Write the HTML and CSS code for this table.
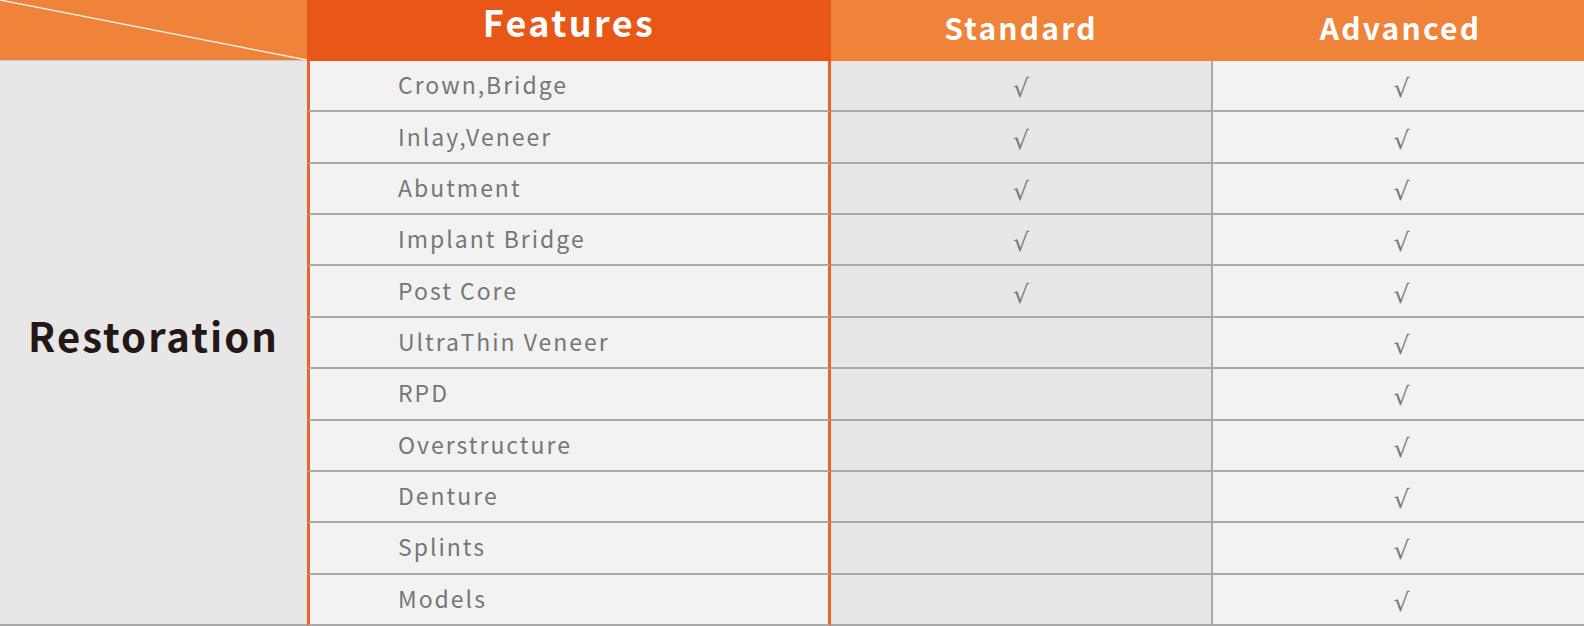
FILE: index.html
```html
<!DOCTYPE html>
<html lang="en">
<head>
<meta charset="utf-8">
<title>Features comparison</title>
<link rel="stylesheet" href="styles.css">
</head>
<body>
<div class="table">
  <div class="hd hd-corner"></div>
  <div class="hd hd-features">Features</div>
  <div class="hd hd-plan">Standard</div>
  <div class="hd hd-plan">Advanced</div>

  <div class="cat">Restoration</div>

  <div class="feat">Crown,Bridge</div><div class="std">√</div><div class="adv">√</div>
  <div class="feat">Inlay,Veneer</div><div class="std">√</div><div class="adv">√</div>
  <div class="feat">Abutment</div><div class="std">√</div><div class="adv">√</div>
  <div class="feat">Implant Bridge</div><div class="std">√</div><div class="adv">√</div>
  <div class="feat">Post Core</div><div class="std">√</div><div class="adv">√</div>
  <div class="feat">UltraThin Veneer</div><div class="std"></div><div class="adv">√</div>
  <div class="feat">RPD</div><div class="std"></div><div class="adv">√</div>
  <div class="feat">Overstructure</div><div class="std"></div><div class="adv">√</div>
  <div class="feat">Denture</div><div class="std"></div><div class="adv">√</div>
  <div class="feat">Splints</div><div class="std"></div><div class="adv">√</div>
  <div class="feat">Models</div><div class="std"></div><div class="adv">√</div>
</div>
</body>
</html>
```
FILE: styles.css
```css
* { box-sizing: border-box; }
html, body { margin: 0; padding: 0; }
body {
  width: 1584px;
  height: 626px;
  overflow: hidden;
  background: #f2f2f2;
  font-family: "Noto Sans CJK SC", "Noto Sans", sans-serif;
}
.table {
  display: grid;
  grid-template-columns: 307px 524px 380px 1fr;
  grid-template-rows: 61px repeat(11, 1fr);
  width: 1590px;
  height: 626px;
}
.hd {
  display: flex;
  justify-content: center;
  align-items: flex-start;
  color: #ffffff;
  font-weight: 700;
  background: #ef833a;
}
.hd-corner {
  border-bottom: 1px solid #c9c9c9;
  background: linear-gradient(to bottom left, #ef833a calc(50% - 1.2px), #ffffff 50%, #ef833a calc(50% + 1.2px));
}
.hd-features {
  background: #e85715;
  font-size: 36px;
  letter-spacing: 2.4px;
  line-height: 40px;
  padding-top: 1px;
}
.hd-plan {
  font-size: 30px;
  letter-spacing: 2.2px;
  line-height: 36px;
  padding-top: 9px;
}
.cat {
  grid-column: 1;
  grid-row: 2 / span 11;
  display: flex;
  align-items: center;
  justify-content: center;
  padding-bottom: 14px;
  background: #e6e7e6;
  border-bottom: 2px solid #a9a9a9;
  color: #231815;
  font-size: 40px;
  font-weight: 700;
  letter-spacing: 2px;
}
.feat, .std, .adv {
  display: flex;
  align-items: center;
  border-bottom: 2px solid #a9a9a9;
}
.feat {
  background: #f2f2f2;
  border-left: 3px solid #e8642a;
  border-right: 3px solid #e8642a;
  padding-left: 88px;
  padding-bottom: 3px;
  font-size: 23px;
  letter-spacing: 2px;
  color: #767676;
}
.std, .adv {
  justify-content: center;
  padding-top: 6px;
  font-family: "DejaVu Sans", sans-serif;
  font-size: 25px;
  line-height: 1;
  color: #7a7a7a;
}
.std {
  background: #e6e7e6;
}
.adv {
  background: #f2f2f2;
  border-left: 2px solid #a9a9a9;
}
```
